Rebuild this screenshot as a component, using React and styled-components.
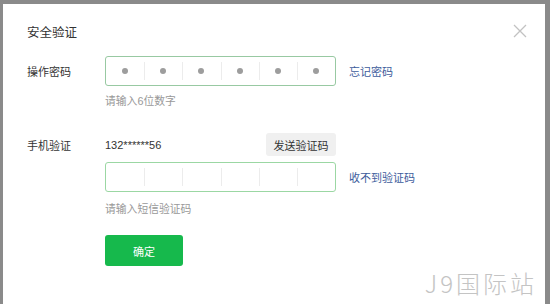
import React from "react";
import styled, { createGlobalStyle } from "styled-components";

const GlobalStyle = createGlobalStyle`
  html, body {
    margin: 0;
    padding: 0;
    background: #8a8a8a;
    overflow: hidden;
  }
  body {
    font-family: "Liberation Sans", "Noto Sans CJK SC", sans-serif;
  }
`;

const Panel = styled.div`
  position: relative;
  margin: 4px 5px 0 3px;
  height: 300px;
  background: #fff;
  padding: 19px 0 0 24px;
  box-sizing: border-box;
`;

const Header = styled.div`
  display: flex;
  align-items: center;
  height: 16px;
  font-size: 12.5px;
  color: #333;
`;

const Close = styled.button`
  position: absolute;
  top: 20px;
  right: 18px;
  width: 14px;
  height: 14px;
  padding: 0;
  border: none;
  background: none;
  cursor: pointer;
`;

const Row = styled.div`
  display: flex;
  align-items: center;
  margin-top: ${({ $top }) => $top}px;
`;

const Label = styled.div`
  width: 78px;
  font-size: 11px;
  color: #333;
  flex-shrink: 0;
`;

const Field = styled.div`
  width: 231px;
  display: flex;
  align-items: center;
  justify-content: space-between;
`;

const CodeBox = styled.div`
  display: flex;
  width: 231px;
  height: 30px;
  box-sizing: border-box;
  border: 1px solid ${({ $color }) => $color};
  border-radius: 3px;
`;

const Cell = styled.div`
  flex: 1;
  position: relative;
  display: flex;
  align-items: center;
  justify-content: center;
  & + &::before {
    content: "";
    position: absolute;
    left: 0;
    top: 5px;
    bottom: 5px;
    width: 1px;
    background: #ececec;
  }
`;

const Dot = styled.span`
  width: 6px;
  height: 6px;
  border-radius: 50%;
  background: #9d9d9d;
`;

const Link = styled.a`
  margin-left: 13px;
  font-size: 11px;
  color: #3d5c9c;
  text-decoration: none;
  cursor: pointer;
`;

const Hint = styled.div`
  margin: ${({ $top }) => $top}px 0 0 78px;
  font-size: 10.8px;
  line-height: 16px;
  color: #999;
`;

const Phone = styled.span`
  font-size: 11px;
  color: #333;
`;

const SendButton = styled.button`
  height: 23px;
  width: 70px;
  padding: 0;
  border: none;
  border-radius: 3px;
  background: #f0f0f0;
  color: #333;
  font-family: inherit;
  font-size: 11px;
  cursor: pointer;
`;

const Submit = styled.button`
  margin: 18px 0 0 78px;
  width: 78px;
  height: 31px;
  border: none;
  border-radius: 3px;
  background: #16b94c;
  color: #fff;
  font-family: inherit;
  font-size: 11px;
  cursor: pointer;
`;

const Watermark = styled.div`
  position: absolute;
  right: 8px;
  bottom: 7px;
  font-family: "Noto Sans CJK SC", sans-serif;
  font-weight: 300;
  font-size: 24px;
  line-height: 28px;
  letter-spacing: 3px;
  color: #c4c4c4;
`;

const CodeInput = ({ filled, color }) => (
  <CodeBox $color={color}>
    {Array.from({ length: 6 }).map((_, i) => (
      <Cell key={i}>{filled && <Dot />}</Cell>
    ))}
  </CodeBox>
);

export default function App() {
  return (
    <>
      <GlobalStyle />
      <Panel>
        <Header>安全验证</Header>
        <Close aria-label="close">
          <svg width="14" height="14" viewBox="0 0 14 14">
            <path d="M1 1L13 13M13 1L1 13" stroke="#c2c2c2" strokeWidth="1.3" fill="none" />
          </svg>
        </Close>

        <Row $top={17}>
          <Label>操作密码</Label>
          <CodeInput filled color="#98c9a2" />
          <Link>忘记密码</Link>
        </Row>
        <Hint $top={7}>请输入6位数字</Hint>

        <Row $top={24}>
          <Label>手机验证</Label>
          <Field>
            <Phone>132******56</Phone>
            <SendButton>发送验证码</SendButton>
          </Field>
        </Row>
        <Row $top={6}>
          <Label />
          <CodeInput color="#9bd7a3" />
          <Link>收不到验证码</Link>
        </Row>
        <Hint $top={9}>请输入短信验证码</Hint>

        <Submit>确定</Submit>

        <Watermark>J9国际站</Watermark>
      </Panel>
    </>
  );
}
